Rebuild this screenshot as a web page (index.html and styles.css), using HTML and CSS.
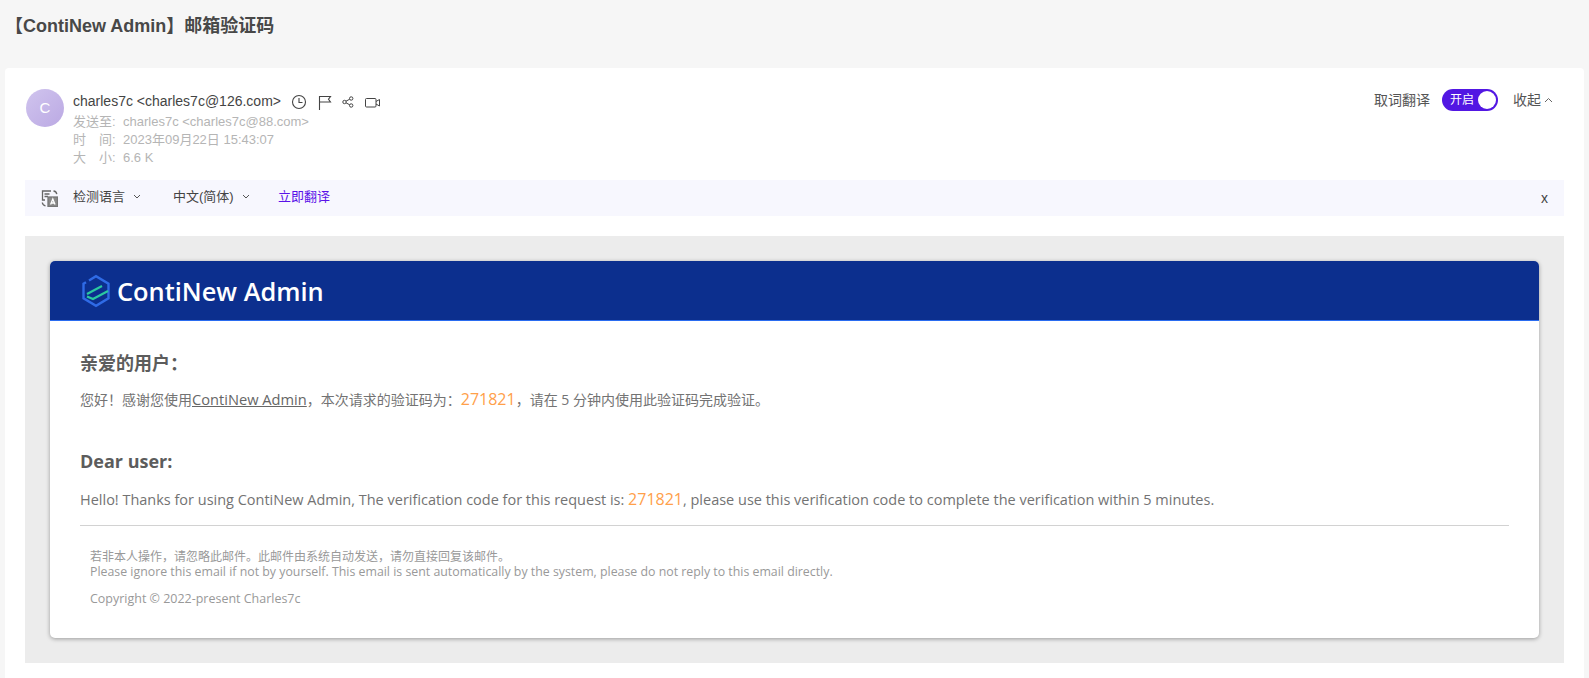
FILE: index.html
```html
<!DOCTYPE html>
<html lang="zh">
<head>
<meta charset="utf-8">
<title>邮箱验证码</title>
<link rel="stylesheet" href="styles.css">
</head>
<body>
<header class="subject">【ContiNew Admin】邮箱验证码</header>
<main class="panel">
  <section class="head">
    <div class="avatar">C</div>
    <div class="meta">
      <div class="sender">
        <span>charles7c &lt;charles7c@126.com&gt;</span>
        <svg class="ic" width="16" height="16" viewBox="0 0 16 16" fill="none" stroke="#444" stroke-width="1.1"><circle cx="8" cy="8" r="6.5"/><path d="M8 4v4.5h3.5"/></svg>
        <svg class="ic" width="14" height="15" viewBox="0 0 14 15" fill="none" stroke="#444" stroke-width="1.1"><path d="M1.500 15V1.500h11l-2 2.700 2 2.800h-11"/></svg>
        <svg class="ic" width="12" height="12" viewBox="0 0 12 12" fill="none" stroke="#444"><circle cx="2.500" cy="6" r="1.700"/><circle cx="9.200" cy="2.500" r="1.700"/><circle cx="9.200" cy="9.500" r="1.700"/><path d="M4 5.200l3.700-2M4 6.800l3.700 2"/></svg>
        <svg class="ic" width="15" height="11" viewBox="0 0 15 11" fill="none" stroke="#444"><rect x="0.500" y="1.500" width="10.500" height="8.500" rx="1"/><path d="M11 4.500l3.500-2v6.500l-3.500-2"/></svg>
      </div>
      <div class="line"><span class="lab">发送至:</span>charles7c &lt;charles7c@88.com&gt;</div>
      <div class="line"><span class="lab">时　间:</span>2023年09月22日 15:43:07</div>
      <div class="line"><span class="lab">大　小:</span>6.6 K</div>
    </div>
    <div class="actions">
      <span>取词翻译</span>
      <span class="switch">开启<i class="knob"></i></span>
      <span class="fold">收起<svg width="9" height="6" viewBox="0 0 9 6" fill="none" stroke="#666"><path d="M1 5l3.500-3.500L8 5"/></svg></span>
    </div>
  </section>
  <section class="bar">
    <svg class="trans" width="17" height="17" viewBox="0 0 17 17" fill="none" stroke="#666" stroke-width="1.300"><path d="M10 1H1.500v9H4M3.500 4h5M3.500 6.500h3.500"/><path d="M12.500 1c1.800.2 3 1.400 3.300 3.200"/><path d="M1.300 12.500c.2 1.800 1.400 3 3.200 3.300"/><rect x="7" y="7" width="9.500" height="9.500" fill="#8a8a8a" stroke="#777"/><path d="M9.600 14.500l2.200-5.500 2.200 5.500M10.400 13h2.800" stroke="#fff"/></svg>
    <span class="sel sel1">检测语言<svg width="8" height="5" viewBox="0 0 8 5" fill="none" stroke="#555"><path d="M1 1l3 3 3-3"/></svg></span>
    <span class="sel sel2">中文(简体)<svg width="8" height="5" viewBox="0 0 8 5" fill="none" stroke="#555"><path d="M1 1l3 3 3-3"/></svg></span>
    <a class="now">立即翻译</a>
    <span class="close">x</span>
  </section>
  <section class="mailbg">
    <article class="mail">
      <div class="banner">
        <svg width="32" height="34" viewBox="0 0 32 34" fill="none"><path d="M9 6.500L16 2.200l12.500 7.500v14.600L16 31.800 3.500 24.300V9.700L6 8.200" stroke="#2f6be6" stroke-width="2.400"/><path d="M7 20L22 12" stroke="#2bc9a0" stroke-width="2.200"/><path d="M7 22.500l6 2.500 15-8" stroke="#2bc9a0" stroke-width="2.200"/></svg>
        <span class="brand">ContiNew Admin</span>
      </div>
      <div class="body">
        <h2 class="cn">亲爱的用户：</h2>
        <p class="para">您好！感谢您使用<a class="lnk">ContiNew Admin</a>，本次请求的验证码为：<b class="code">271821</b>，请在 5 分钟内使用此验证码完成验证。</p>
        <h2 class="en">Dear user:</h2>
        <p class="para para-en">Hello! Thanks for using ContiNew Admin, The verification code for this request is: <b class="code">271821</b>, please use this verification code to complete the verification within 5 minutes.</p>
        <div class="foot">
          <p>若非本人操作，请忽略此邮件。此邮件由系统自动发送，请勿直接回复该邮件。<br><span class="foot-en">Please ignore this email if not by yourself. This email is sent automatically by the system, please do not reply to this email directly.</span></p>
          <p class="copy">Copyright © 2022-present Charles7c</p>
        </div>
      </div>
    </article>
  </section>
</main>
</body>
</html>
```
FILE: styles.css
```css
html, body { margin: 0; padding: 0; height: 678px; overflow: hidden; }
body { background: #f6f6f6; font-family: "Liberation Sans", "Noto Sans CJK SC", sans-serif; color: #444; }
.subject { height: 68px; padding: 15px 0 0 5px; box-sizing: border-box; font-size: 18px; line-height: 22px; font-weight: 700; color: #484848; }
.panel { margin: 0 5px; height: 610px; box-sizing: border-box; background: #fff; border-radius: 4px 4px 0 0; padding: 20px 20px 0; }
.head { display: flex; height: 92px; }
.avatar { width: 38px; height: 38px; border-radius: 50%; background: linear-gradient(135deg, #d0c4ee, #bba9e3); color: #fff; font-size: 15px; line-height: 38px; text-align: center; margin: 1px 9px 0 1px; }
.meta { flex: 1; padding-top: 2px; }
.sender { display: flex; align-items: center; height: 22px; font-size: 14px; color: #444; }
.ic { margin-left: 10.500px; flex: none; position: relative; top: 1px; }
.line { font-size: 13px; line-height: 18px; color: #b5b5b5; position: relative; top: 1px; }
.lab { display: inline-block; width: 50px; }
.actions { display: flex; align-items: flex-start; font-size: 14px; color: #555; gap: 12px; line-height: 24px; padding-right: 11px; }
.switch { position: relative; width: 56px; height: 22px; margin-top: 1px; box-sizing: border-box; background: #5217e3; border-radius: 11px; color: #fff; font-size: 12px; line-height: 22px; padding-left: 8px; }
.knob { position: absolute; right: 2px; top: 2px; width: 18px; height: 18px; background: #fff; border-radius: 50%; }
.fold { display: inline-flex; align-items: center; gap: 3px; margin-left: 3px; }
.bar { display: flex; align-items: center; height: 36px; background: #f7f7fe; font-size: 13px; color: #444; padding-left: 16px; }
.trans { margin-right: 15px; }
.sel, .now { padding-bottom: 5px; }
.sel { display: inline-flex; align-items: center; gap: 8px; }
.sel svg { margin-top: 1px; }
.sel1 { width: 100px; }
.sel2 { width: 105px; }
.now { color: #5a12e8; }
.close { margin-left: auto; margin-right: 16px; font-size: 14px; }
.mailbg { margin-top: 20px; height: 427px; box-sizing: border-box; background: #ececec; padding: 25px 25px 0; }
.mail { height: 377px; background: #fff; border-radius: 5px; box-shadow: 0 1px 4px rgba(0,0,0,.35); font-family: "Open Sans", "Noto Sans CJK SC", sans-serif; color: #666; overflow: hidden; }
.banner { display: flex; align-items: center; height: 60px; box-sizing: border-box; background: #0c2f8e; border-bottom: 1px solid #2a6cf0; padding-left: 30px; gap: 5px; }
.brand { color: #fff; font-size: 25.400px; font-weight: 600; }
.body { padding: 0 30px; }
.cn { margin: 29px 0 0; font-size: 18px; line-height: 26px; font-weight: 700; color: #5c5c5c; }
.en { margin: 36px 0 0; font-size: 18px; line-height: 26px; font-weight: 700; color: #5c5c5c; }
.para { margin: 11px 0 0; font-size: 14px; line-height: 24px; color: #737373; }
.para-en { font-size: 14.490px; margin-top: 13px; }
.lnk { text-decoration: underline; color: #666; font-size: 14.650px; }
.code { font-size: 16px; font-weight: 400; color: #ffa04a; }
.foot { margin-top: 13px; border-top: 1px solid #d2d2d2; padding: 23px 10px 0; font-size: 12px; line-height: 15px; color: #999; }
.foot p { margin: 0; }
.foot-en { font-size: 12.350px; }
.foot .copy { margin-top: 12px; font-size: 12.480px; }
```
